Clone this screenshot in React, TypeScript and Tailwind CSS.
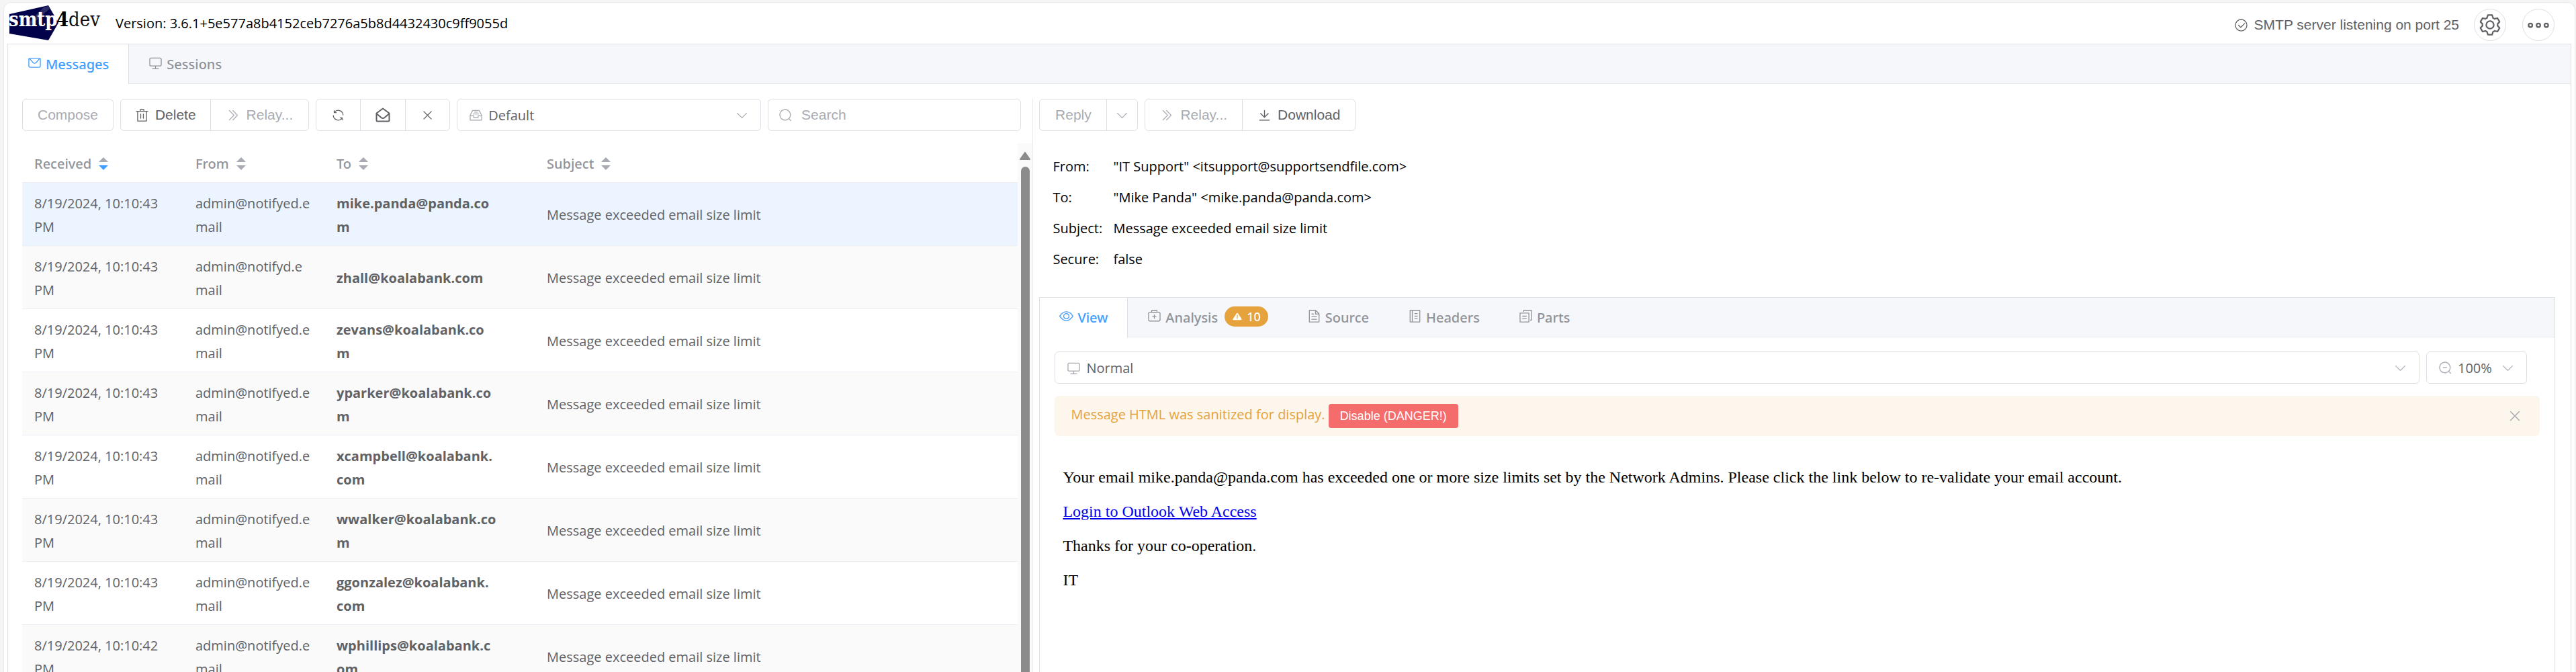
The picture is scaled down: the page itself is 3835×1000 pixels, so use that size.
import type { ReactNode } from "react";

const ICONS = {
  message: [
    "M128 224v512a64 64 0 0 0 64 64h640a64 64 0 0 0 64-64V224H128zm0-64h768a64 64 0 0 1 64 64v512a128 128 0 0 1-128 128H192A128 128 0 0 1 64 736V224a64 64 0 0 1 64-64z",
    "M904 224 656.512 506.88a192 192 0 0 1-289.024 0L120 224h784zm-698.944 0 210.56 240.704a128 128 0 0 0 192.704 0L818.944 224H205.056z",
  ],
  monitor: [
    "M544 768v128h192a32 32 0 1 1 0 64H288a32 32 0 1 1 0-64h192V768H192A128 128 0 0 1 64 640V256a128 128 0 0 1 128-128h640a128 128 0 0 1 128 128v384a128 128 0 0 1-128 128H544zM192 192a64 64 0 0 0-64 64v384a64 64 0 0 0 64 64h640a64 64 0 0 0 64-64V256a64 64 0 0 0-64-64H192z",
  ],
  trash: [
    "M160 256H96a32 32 0 0 1 0-64h256V95.936a32 32 0 0 1 32-32h256a32 32 0 0 1 32 32V192h256a32 32 0 1 1 0 64h-64v672a32 32 0 0 1-32 32H192a32 32 0 0 1-32-32V256zm448-64v-64H416v64h192zM224 896h576V256H224v640zm192-128a32 32 0 0 1-32-32V416a32 32 0 0 1 64 0v320a32 32 0 0 1-32 32zm192 0a32 32 0 0 1-32-32V416a32 32 0 0 1 64 0v320a32 32 0 0 1-32 32z",
  ],
  doubleRight: [
    "M452.864 149.312a29.12 29.12 0 0 1 41.728.064L826.24 489.664a32 32 0 0 1 0 44.672L494.592 874.624a29.12 29.12 0 0 1-41.728 0 30.592 30.592 0 0 1 0-42.752L764.736 512 452.864 192a30.592 30.592 0 0 1 0-42.688zm-256 0a29.12 29.12 0 0 1 41.728.064L570.24 489.664a32 32 0 0 1 0 44.672L238.592 874.624a29.12 29.12 0 0 1-41.728 0 30.592 30.592 0 0 1 0-42.752L508.736 512 196.864 192a30.592 30.592 0 0 1 0-42.688z",
  ],
  down: [
    "M831.872 340.864 512 652.672 192.128 340.864a30.592 30.592 0 0 0-42.752 0 29.12 29.12 0 0 0 0 41.6L489.664 714.24a32 32 0 0 0 44.672 0l340.288-331.712a29.12 29.12 0 0 0 0-41.728 30.592 30.592 0 0 0-42.752 0z",
  ],
  close: [
    "M764.288 214.592 512 466.88 259.712 214.592a31.936 31.936 0 0 0-45.12 45.12L466.752 512 214.528 764.224a31.936 31.936 0 1 0 45.12 45.184L512 557.184l252.288 252.288a31.936 31.936 0 0 0 45.12-45.12L557.12 512.064l252.288-252.352a31.936 31.936 0 1 0-45.12-45.184z",
  ],
  refresh: [
    "M771.776 794.88A384 384 0 0 1 128 512h64a320 320 0 0 0 555.712 216.448H654.72a32 32 0 1 1 0-64h149.056a32 32 0 0 1 32 32v148.928a32 32 0 1 1-64 0v-50.56zM276.288 295.616h92.992a32 32 0 0 1 0 64H220.16a32 32 0 0 1-32-32V178.56a32 32 0 0 1 64 0v50.56A384 384 0 0 1 896.128 512h-64a320 320 0 0 0-555.776-216.384z",
  ],
  search: [
    "m795.904 750.72 124.992 124.928a32 32 0 0 1-45.248 45.248L750.656 795.904a416 416 0 1 1 45.248-45.248zM480 832a352 352 0 1 0 0-704 352 352 0 0 0 0 704z",
  ],
  zoomOut: [
    "m795.904 750.72 124.992 124.928a32 32 0 0 1-45.248 45.248L750.656 795.904a416 416 0 1 1 45.248-45.248zM480 832a352 352 0 1 0 0-704 352 352 0 0 0 0 704zM352 448h256a32 32 0 0 1 0 64H352a32 32 0 0 1 0-64z",
  ],
  view: [
    "M512 160c320 0 512 352 512 352S832 864 512 864 0 512 0 512s192-352 512-352zm0 64c-225.28 0-384.128 208.064-436.8 288 52.608 79.872 211.456 288 436.8 288 225.28 0 384.128-208.064 436.8-288-52.608-79.872-211.456-288-436.8-288zm0 64a224 224 0 1 1 0 448 224 224 0 0 1 0-448zm0 64a160.192 160.192 0 0 0-160 160c0 88.192 71.744 160 160 160s160-71.808 160-160-71.744-160-160-160z",
  ],
  download: [
    "M160 832h704a32 32 0 1 1 0 64H160a32 32 0 1 1 0-64zm384-253.696 236.288-236.352 45.248 45.248L508.8 704 192 387.2l45.248-45.248L480 584.704V128h64v450.304z",
  ],
  circleCheck: [
    "M512 896a384 384 0 1 0 0-768 384 384 0 0 0 0 768zm0 64a448 448 0 1 1 0-896 448 448 0 0 1 0 896z",
    "M745.344 361.344a32 32 0 0 1 45.312 45.312l-288 288a32 32 0 0 1-45.312 0l-160-160a32 32 0 1 1 45.312-45.312L480 626.752l265.344-265.408z",
  ],
  aidKit: [
    "M192 256a64 64 0 0 0-64 64v448a64 64 0 0 0 64 64h640a64 64 0 0 0 64-64V320a64 64 0 0 0-64-64H192zm0-64h640a128 128 0 0 1 128 128v448a128 128 0 0 1-128 128H192A128 128 0 0 1 64 768V320a128 128 0 0 1 128-128z",
    "M544 512h96a32 32 0 0 1 0 64h-96v96a32 32 0 0 1-64 0v-96h-96a32 32 0 0 1 0-64h96v-96a32 32 0 0 1 64 0v96zM352 128v64h320v-64H352zm-32-64h384a32 32 0 0 1 32 32v128a32 32 0 0 1-32 32H320a32 32 0 0 1-32-32V96a32 32 0 0 1 32-32z",
  ],
  document: [
    "M832 384H576V128H192v768h640V384zm-26.496-64L640 154.496V320h165.504zM160 64h480l256 256v608a32 32 0 0 1-32 32H160a32 32 0 0 1-32-32V96a32 32 0 0 1 32-32zm160 448h384v64H320v-64zm0-192h160v64H320v-64zm0 384h384v64H320v-64z",
  ],
  memo: [
    "M160 64h704a32 32 0 0 1 32 32v832a32 32 0 0 1-32 32H160a32 32 0 0 1-32-32V96a32 32 0 0 1 32-32zm32 64v768h96V128h-96zm160 0v768h480V128H352z",
    "M480 288h224v64H480zM480 480h224v64H480zM480 672h224v64H480z",
  ],
  documentCopy: [
    "M128 320v576h576V320H128zm-32-64h640a32 32 0 0 1 32 32v640a32 32 0 0 1-32 32H96a32 32 0 0 1-32-32V288a32 32 0 0 1 32-32zM960 96v704a32 32 0 0 1-32 32h-96v-64h64V128H384v64h-64V96a32 32 0 0 1 32-32h576a32 32 0 0 1 32 32zM256 672h320v64H256v-64zm0-192h320v64H256v-64z",
  ],
  warning: [
    "M928.99 755.83 574.6 203.25c-12.89-20.16-36.76-32.58-62.6-32.58s-49.71 12.43-62.6 32.58L95.01 755.83c-12.91 20.12-12.9 44.91.01 65.03 12.92 20.12 36.78 32.51 62.59 32.49h708.78c25.82.01 49.68-12.37 62.59-32.49 12.91-20.12 12.92-44.91.01-65.03zM554.67 768h-85.33v-85.33h85.33V768zm0-426.67v298.66h-85.33V341.32l85.33.01z",
  ],
  tray: [
    "M288 384h448v64H288v-64zm96-128h256v64H384v-64zM131.456 512H384v128h256V512h252.544L721.856 192H302.144L131.456 512zM896 576H704v128H320V576H128v256h768V576zM275.776 128h472.448a32 32 0 0 1 28.608 17.664l179.84 359.552A32 32 0 0 1 960 519.552V864a32 32 0 0 1-32 32H96a32 32 0 0 1-32-32V519.552a32 32 0 0 1 3.392-14.336l179.776-359.552A32 32 0 0 1 275.776 128z",
  ],
  more: [
    "M176 416a112 112 0 1 1 0 224 112 112 0 0 1 0-224m0 64a48 48 0 1 0 0 96 48 48 0 0 0 0-96m336-64a112 112 0 1 1 0 224 112 112 0 0 1 0-224m0 64a48 48 0 1 0 0 96 48 48 0 0 0 0-96m336-64a112 112 0 1 1 0 224 112 112 0 0 1 0-224m0 64a48 48 0 1 0 0 96 48 48 0 0 0 0-96",
  ],
  setting: [
    "M600.704 64a32 32 0 0 1 30.464 22.208l35.2 109.376c14.784 7.232 28.928 15.36 42.432 24.512l112.384-24.192a32 32 0 0 1 34.432 15.36L944.32 364.8a32 32 0 0 1-4.032 37.504l-77.12 85.12a357.12 357.12 0 0 1 0 49.024l77.12 85.248a32 32 0 0 1 4.032 37.504l-88.704 153.6a32 32 0 0 1-34.432 15.296L708.8 803.904c-13.44 9.088-27.648 17.28-42.368 24.512l-35.264 109.376A32 32 0 0 1 600.704 960H423.296a32 32 0 0 1-30.464-22.208L357.696 828.48a351.616 351.616 0 0 1-42.56-24.64l-112.32 24.256a32 32 0 0 1-34.432-15.36L79.68 659.2a32 32 0 0 1 4.032-37.504l77.12-85.248a357.12 357.12 0 0 1 0-48.896l-77.12-85.248A32 32 0 0 1 79.68 364.8l88.704-153.6a32 32 0 0 1 34.432-15.296l112.32 24.256c13.568-9.152 27.776-17.408 42.56-24.64l35.2-109.312A32 32 0 0 1 423.232 64H600.64zm-23.424 64H446.72l-36.352 113.088-24.512 11.968a294.113 294.113 0 0 0-34.816 20.096l-22.656 15.36-116.224-25.088-65.28 113.152 79.68 88.192-1.92 27.136a293.12 293.12 0 0 0 0 40.192l1.92 27.136-79.808 88.192 65.344 113.152 116.224-25.024 22.656 15.296a294.113 294.113 0 0 0 34.816 20.096l24.512 11.968L446.72 896h130.688l36.48-113.152 24.448-11.904a288.282 288.282 0 0 0 34.752-20.096l22.592-15.296 116.288 25.024 65.28-113.152-79.744-88.192 1.92-27.136a293.12 293.12 0 0 0 0-40.256l-1.92-27.136 79.808-88.128-65.344-113.152-116.288 24.96-22.592-15.232a287.616 287.616 0 0 0-34.752-20.096l-24.448-11.904L577.344 128zM512 320a192 192 0 1 1 0 384 192 192 0 0 1 0-384zm0 64a128 128 0 1 0 0 256 128 128 0 0 0 0-256z",
  ],
};

type IconName = keyof typeof ICONS;

function Icon({ name, className = "size-[21px]" }: { name: IconName; className?: string }) {
  return (
    <svg viewBox="0 0 1024 1024" fill="currentColor" aria-hidden="true" className={`shrink-0 ${className}`}>
      {ICONS[name].map((d) => (
        <path key={d} d={d} />
      ))}
    </svg>
  );
}

function OpenEnvelope() {
  return (
    <svg viewBox="0 0 24 24" fill="none" stroke="currentColor" strokeWidth="2" strokeLinejoin="round" aria-hidden="true" className="size-6 shrink-0">
      <path d="M2.500 9.500 L12 2.500 L21.500 9.500 V20 a1.500 1.500 0 0 1-1.500 1.500 H4 a1.500 1.500 0 0 1-1.500-1.500z" />
      <path d="M2.500 10 L9.500 16 Q12 18 14.500 16 L21.500 10" />
    </svg>
  );
}

function Logo() {
  return (
    <svg viewBox="0 0 142 54" className="h-[54px] w-[142px] shrink-0" role="img" aria-label="smtp4dev">
      <polygon points="0,13 58,0 73,26 58,52 0,42" fill="#02024a" />
      <polygon points="52,2 58,1 60,5 32,30 24,30" fill="#2a2a66" />
      <g fontFamily="'DejaVu Serif Condensed', 'DejaVu Serif', serif" fontSize="29">
        <text x="-1" y="31" fontWeight="700" fill="#fff">smtp</text>
        <text x="70" y="31" fontWeight="700" fill="#000">4</text>
        <text x="88" y="31" fill="#111">dev</text>
      </g>
    </svg>
  );
}

const BTN = "flex h-12 items-center justify-center bg-white font-[Liberation_Sans,Arial,sans-serif] text-[21px]";

function ToolButton({
  icon,
  children,
  disabled,
  className = "",
  label,
}: {
  icon?: ReactNode;
  children?: ReactNode;
  disabled?: boolean;
  className?: string;
  label?: string;
}) {
  return (
    <button
      type="button"
      disabled={disabled}
      aria-label={label}
      className={`${BTN} gap-[9px] border border-[#dcdfe6] ${disabled ? "text-[#a8abb2]" : "text-[#606266]"} ${className}`}
    >
      {icon}
      {children}
    </button>
  );
}

function Dropdown({ icon, value, label, className }: { icon: IconName; value: string; label: string; className: string }) {
  return (
    <div className={`relative h-12 ${className}`}>
      <select
        aria-label={label}
        className="h-full w-full appearance-none rounded-md border border-[#dcdfe6] bg-white pt-px pl-[46px] pr-12 text-xl text-[#606266]"
      >
        <option>{value}</option>
      </select>
      <span className="pointer-events-none absolute inset-y-0 left-[18px] flex items-center text-[#a8abb2]">
        <Icon name={icon} />
      </span>
      <span className="pointer-events-none absolute inset-y-0 right-[18px] flex items-center text-[#a8abb2]">
        <Icon name="down" />
      </span>
    </div>
  );
}

function Tab({ icon, label, active, badge }: { icon: IconName; label: string; active?: boolean; badge?: string }) {
  return (
    <button
      type="button"
      role="tab"
      aria-selected={!!active}
      className={`-mb-px flex h-[59px] items-center px-[29px] font-[Noto_Sans,Open_Sans,sans-serif] text-xl font-medium ${
        active ? "border-r border-[#dcdfe6] bg-white text-[#409eff]" : "text-[#909399]"
      }`}
    >
      <Icon name={icon} className="mb-1 mr-[6px] size-[21px]" />
      {label}
      {badge && (
        <span className="mb-1 ml-[10px] flex h-[30px] items-center gap-[6px] rounded-full bg-[#e6a23c] px-[11px] text-lg text-white">
          <Icon name="warning" className="size-4" />
          {badge}
        </span>
      )}
    </button>
  );
}

function SortCarets({ descending }: { descending?: boolean }) {
  return (
    <svg viewBox="0 0 14 20" className="ml-[11px] h-5 w-[14px]" aria-hidden="true">
      <path d="M7 0 14 7H0z" fill="#a8abb2" />
      <path d="M0 12H14L7 19z" fill={descending ? "#409eff" : "#a8abb2"} />
    </svg>
  );
}

/* Each recipient is split at the place where a narrow column may wrap it. */
const MESSAGES = [
  { time: "8/19/2024, 10:10:43 PM", from: "admin@notifyed.email", to: ["mike.panda@panda.co", "m"] },
  { time: "8/19/2024, 10:10:43 PM", from: "admin@notifyd.email", to: ["zhall@koalabank.com", ""] },
  { time: "8/19/2024, 10:10:43 PM", from: "admin@notifyed.email", to: ["zevans@koalabank.co", "m"] },
  { time: "8/19/2024, 10:10:43 PM", from: "admin@notifyed.email", to: ["yparker@koalabank.co", "m"] },
  { time: "8/19/2024, 10:10:43 PM", from: "admin@notifyed.email", to: ["xcampbell@koalabank.", "com"] },
  { time: "8/19/2024, 10:10:43 PM", from: "admin@notifyed.email", to: ["wwalker@koalabank.co", "m"] },
  { time: "8/19/2024, 10:10:43 PM", from: "admin@notifyed.email", to: ["ggonzalez@koalabank.", "com"] },
  { time: "8/19/2024, 10:10:42 PM", from: "admin@notifyed.email", to: ["wphillips@koalabank.c", "om"] },
];

const COLUMNS = [
  { title: "Received", width: "w-60" },
  { title: "From", width: "w-[210px]" },
  { title: "To", width: "w-[270px]" },
  { title: "", width: "w-[43px]" },
  { title: "Subject", width: "" },
];

function MessageTable() {
  return (
    <table className="w-full table-fixed border-separate border-spacing-0 text-xl text-[#606266]">
      <thead>
        <tr>
          {COLUMNS.map((c) => (
            <th
              key={c.title}
              scope="col"
              className={`h-[59px] border-b border-[#ebeef5] text-left font-[Noto_Sans,Open_Sans,sans-serif] font-medium text-[#909399] ${c.title ? "px-[18px]" : "p-0"} ${c.width}`}
            >
              {c.title && (
                <span className="flex items-center pt-1">
                  {c.title}
                  <SortCarets descending={c.title === "Received"} />
                </span>
              )}
            </th>
          ))}
        </tr>
      </thead>
      <tbody>
        {MESSAGES.map((m, i) => {
          const cell = `h-[94px] border-b border-[#ebeef5] px-[18px] pt-[2px] pb-0 leading-[35px] ${
            i === 0 ? "bg-[#ecf5ff]" : i % 2 ? "bg-[#fafafa]" : "bg-white"
          }`;
          return (
            <tr key={m.to[0]}>
              <td className={cell}>
                <span className="block max-w-[196px]">{m.time}</span>
              </td>
              <td className={`${cell} break-all`}>{m.from}</td>
              <td className={`${cell} font-bold`}>
                {m.to[0]}
                {m.to[1] && <wbr />}
                {m.to[1]}
              </td>
              <td className={cell} />
              <td className={cell}>Message exceeded email size limit</td>
            </tr>
          );
        })}
      </tbody>
    </table>
  );
}

function MessageList() {
  return (
    <section className="flex w-[39.9%] shrink-0 flex-col border-r border-[#e8eaf0]">
      <div className="mb-[18px] flex gap-[10px] pr-[17px]">
        <ToolButton disabled className="rounded-md px-[22px]">Compose</ToolButton>
        <div className="flex">
          <ToolButton className="rounded-l-md px-[21px]" icon={<Icon name="trash" />}>Delete</ToolButton>
          <ToolButton disabled className="-ml-px rounded-r-md px-[23px]" icon={<Icon name="doubleRight" />}>Relay...</ToolButton>
        </div>
        <div className="flex">
          <ToolButton label="Refresh" className="w-[67px] rounded-l-md" icon={<Icon name="refresh" />} />
          <ToolButton label="Mark all as read" className="-ml-px w-[68px]" icon={<OpenEnvelope />} />
          <ToolButton label="Clear" className="-ml-px w-[67px] rounded-r-md" icon={<Icon name="close" />} />
        </div>
        <Dropdown icon="tray" value="Default" label="Mailbox" className="flex-[6]" />
        <div className="relative h-12 flex-[5]">
          <input
            type="search"
            placeholder="Search"
            aria-label="Search"
            className="h-full w-full rounded-md border border-[#dcdfe6] bg-white pl-[49px] pr-4 font-[Liberation_Sans,Arial,sans-serif] text-[21px] placeholder:text-[#a8abb2]"
          />
          <span className="pointer-events-none absolute inset-y-0 left-4 flex items-center text-[#a8abb2]">
            <Icon name="search" />
          </span>
        </div>
      </div>
      <div className="flex min-h-0 flex-1">
        <div className="min-w-0 flex-1 overflow-hidden">
          <MessageTable />
        </div>
        <div className="flex w-[22px] flex-col items-center bg-[#fafafa] pt-[13px]">
          <svg viewBox="0 0 16 12" className="h-3 w-4 shrink-0" aria-hidden="true">
            <path d="M8 1 15 11H1z" fill="#8b8b8b" stroke="#8b8b8b" strokeWidth="2" strokeLinejoin="round" />
          </svg>
          <div className="mt-[10px] w-[13px] flex-1 rounded-t-full bg-[#8b8b8b]" />
        </div>
      </div>
    </section>
  );
}

const DETAILS = [
  ["From:", '"IT Support" <itsupport@supportsendfile.com>'],
  ["To:", '"Mike Panda" <mike.panda@panda.com>'],
  ["Subject:", "Message exceeded email size limit"],
  ["Secure:", "false"],
];

function MessageView() {
  return (
    <section className="flex min-w-0 flex-1 flex-col pl-[9px] pr-[2px]">
      <div className="flex gap-[10px]">
        <div className="flex">
          <ToolButton disabled className="w-[101px] rounded-l-md">Reply</ToolButton>
          <ToolButton disabled label="More reply options" className="-ml-px w-[47px] rounded-r-md" icon={<Icon name="down" />} />
        </div>
        <div className="flex">
          <ToolButton disabled className="rounded-l-md px-[22px]" icon={<Icon name="doubleRight" />}>Relay...</ToolButton>
          <ToolButton className="-ml-px rounded-r-md px-[22px]" icon={<Icon name="download" />}>Download</ToolButton>
        </div>
      </div>
      <dl className="mt-[30px] grid grid-cols-[90px_1fr] pl-5 text-xl leading-[46px] text-black">
        {DETAILS.map(([term, value]) => (
          <div key={term} className="contents">
            <dt>{term}</dt>
            <dd>{value}</dd>
          </div>
        ))}
      </dl>
      <div className="mt-[33px] flex flex-1 flex-col border border-b-0 border-[#dcdfe6]">
        <div role="tablist" className="flex h-[59px] border-b border-[#e4e7ed] bg-[#f5f7fa]">
          <Tab icon="view" label="View" active />
          <Tab icon="aidKit" label="Analysis" badge="10" />
          <Tab icon="document" label="Source" />
          <Tab icon="memo" label="Headers" />
          <Tab icon="documentCopy" label="Parts" />
        </div>
        <div className="px-[22px] pt-[21px]">
          <div className="flex gap-[10px] pr-[19px]">
            <Dropdown icon="monitor" value="Normal" label="Display mode" className="flex-1" />
            <Dropdown icon="zoomOut" value="100%" label="Zoom" className="w-[150px]" />
          </div>
          <div role="alert" className="mt-[18px] flex h-[60px] items-center rounded-md bg-[#fdf6ec] pl-6 pr-[25px] text-xl text-[#e6a23c]">
            <span className="pb-1">Message HTML was sanitized for display.</span>
            <button
              type="button"
              className="ml-[5px] h-9 rounded-[4px] bg-[#f56c6c] px-[17px] font-[Liberation_Sans,Arial,sans-serif] text-lg leading-none text-white"
            >
              Disable (DANGER!)
            </button>
            <button type="button" aria-label="Close" className="ml-auto text-[#a8abb2]">
              <Icon name="close" className="size-6" />
            </button>
          </div>
          <article className="flex flex-col gap-6 px-3 pt-12 font-[Liberation_Serif,Times_New_Roman,serif] text-2xl leading-[27px] text-black">
            <p>
              Your email mike.panda@panda.com has exceeded one or more size limits set by the Network Admins. Please click the link below to
              re-validate your email account.
            </p>
            <p>
              <a href="#login" className="text-[#0000ee] underline">Login to Outlook Web Access</a>
            </p>
            <p>Thanks for your co-operation.</p>
            <p>IT</p>
          </article>
        </div>
      </div>
    </section>
  );
}

export default function App() {
  return (
    <div className="h-screen overflow-hidden bg-[#f5f5f5] pl-[5px] pr-px pt-[3px] font-[Open_Sans,Noto_Sans,sans-serif]">
      <div className="flex h-full flex-col rounded-t-xl border-x border-t border-[#e9e9e9] bg-white px-[5px]">
        <header className="flex h-[61px] shrink-0 items-center pl-[3px] pr-[25px]">
          <Logo />
          <h1 className="ml-4 text-xl text-black">Version: 3.6.1+5e577a8b4152ceb7276a5b8d4432430c9ff9055d</h1>
          <div className="ml-auto flex items-center pt-[5px]">
            <p className="flex items-center gap-[9px] font-[Liberation_Sans,Arial,sans-serif] text-[21px] text-[#606266]">
              <Icon name="circleCheck" />
              SMTP server listening on port 25
            </p>
            <button type="button" aria-label="Settings" className="ml-[22px] flex size-12 items-center justify-center rounded-full border border-[#dcdfe6] text-[#606266]">
              <Icon name="setting" className="size-9" />
            </button>
            <button type="button" aria-label="More" className="ml-6 flex size-12 items-center justify-center rounded-full border border-[#dcdfe6] text-[#606266]">
              <Icon name="more" className="size-9" />
            </button>
          </div>
        </header>
        <main className="flex min-h-0 flex-1 flex-col border border-b-0 border-[#dcdfe6]">
          <div role="tablist" className="flex h-[59px] shrink-0 border-b border-[#e4e7ed] bg-[#f5f7fa]">
            <Tab icon="message" label="Messages" active />
            <Tab icon="monitor" label="Sessions" />
          </div>
          <div className="flex min-h-0 flex-1 px-[21px] pt-[22px]">
            <MessageList />
            <MessageView />
          </div>
        </main>
      </div>
    </div>
  );
}
